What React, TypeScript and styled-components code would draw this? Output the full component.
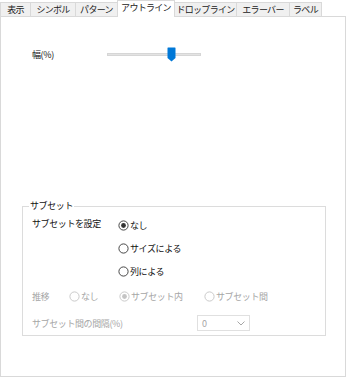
import React from 'react'
import styled, { createGlobalStyle } from 'styled-components'

const GlobalStyle = createGlobalStyle`
  html, body { margin: 0; padding: 0; background: #fff; }
  body {
    font-family: "Noto Sans CJK JP", "Noto Sans", sans-serif;
    font-size: 9px;
    letter-spacing: -0.4px;
    color: #000;
  }
`

const Root = styled.div`
  width: 350px;
  height: 380px;
  background: #fff;
  overflow: hidden;
`

const TabBar = styled.div`
  display: flex;
  align-items: flex-end;
  height: 17px;
`

const Tab = styled.div<{ $active?: boolean; $w: number }>`
  width: ${p => p.$w}px;
  height: ${p => (p.$active ? 17 : 15)}px;
  box-sizing: border-box;
  border: 1px solid #d9d9d9;
  border-bottom: ${p => (p.$active ? 'none' : '1px solid #d9d9d9')};
  margin-left: -1px;
  background: ${p => (p.$active ? '#fff' : '#f0f0f0')};
  font-size: 9px;
  letter-spacing: -0.7px;
  line-height: ${p => (p.$active ? 14 : 13)}px;
  text-align: center;
  color: #222;
  white-space: nowrap;
  &:first-child { margin-left: 0; }
`

const Panel = styled.div`
  width: 346px;
  height: 361px;
  box-sizing: border-box;
  border: 1px solid #d9d9d9;
  margin-top: -1px;
  padding-top: 28px;
  display: flex;
  flex-direction: column;
`

const WidthRow = styled.div`
  display: flex;
  align-items: center;
  padding-left: 31px;
  height: 18px;
`

const Label = styled.span<{ $disabled?: boolean; $w?: number }>`
  color: ${p => (p.$disabled ? '#a6a6a6' : '#111')};
  white-space: nowrap;
  ${p => (p.$w ? `width: ${p.$w}px; flex: none;` : '')}
`

const Slider = styled.div`
  position: relative;
  width: 94px;
  height: 3px;
  background: #e3e3e3;
  border: 1px solid #d6d6d6;
  box-sizing: border-box;
`

const Thumb = styled.svg`
  position: absolute;
  left: 59px;
  top: -7px;
`

const Group = styled.fieldset`
  margin: 137px 0 0 21px;
  width: 304px;
  height: 136px;
  box-sizing: border-box;
  border: 1px solid #dcdcdc;
  padding: 0 0 0 9px;
  display: flex;
  flex-direction: column;
`

const Legend = styled.legend`
  padding: 0 1px;
  margin-left: -3px;
  font-size: 9px;
  color: #111;
  line-height: 12px;
`

const SettingGrid = styled.div`
  display: grid;
  grid-template-columns: 86px auto;
  margin-top: 5px;
`

const RadioList = styled.div`
  display: flex;
  flex-direction: column;
  gap: 7px;
`

const RadioItem = styled.div<{ $disabled?: boolean; $w?: number }>`
  display: flex;
  align-items: center;
  gap: 1px;
  height: 16px;
  color: ${p => (p.$disabled ? '#a6a6a6' : '#111')};
  white-space: nowrap;
  ${p => (p.$w ? `width: ${p.$w}px;` : '')}
`

const TransitionRow = styled.div`
  display: flex;
  align-items: center;
  height: 16px;
  margin-top: 9px;
`

const GapRow = styled.div`
  display: flex;
  align-items: center;
  margin-top: 11px;
`

const Select = styled.div`
  width: 53px;
  height: 16px;
  box-sizing: border-box;
  border: 1px solid #e0e0e0;
  display: flex;
  align-items: center;
  justify-content: space-between;
  padding: 0 4px;
  color: #a6a6a6;
`

const Radio: React.FC<{ checked?: boolean; disabled?: boolean }> = ({ checked, disabled }) => {
  const c = disabled ? '#c4c4c4' : '#333'
  return (
    <svg width="11" height="11" viewBox="0 0 11 11">
      <circle cx="5.5" cy="5.5" r="4.6" fill="#fff" stroke={c} strokeWidth="0.9" />
      {checked && <circle cx="5.5" cy="5.5" r="2.4" fill={c} />}
    </svg>
  )
}

const tabs: [string, number][] = [
  ['表示', 31],
  ['シンボル', 46],
  ['パターン', 43],
  ['アウトライン', 58],
  ['ドロップライン', 63],
  ['エラーバー', 54],
  ['ラベル', 33],
]

export default function App() {
  return (
    <Root>
      <GlobalStyle />
      <TabBar>
        {tabs.map(([t, w]) => (
          <Tab key={t} $w={w} $active={t === 'アウトライン'}>{t}</Tab>
        ))}
      </TabBar>
      <Panel>
        <WidthRow>
          <Label $w={75}>幅(%)</Label>
          <Slider>
            <Thumb width="9" height="15" viewBox="0 0 9 15">
              <path d="M1 0.5 H8 Q8.5 0.5 8.5 1 V11 L4.5 14.5 L0.5 11 V1 Q0.5 0.5 1 0.5 Z" fill="#0078d7" />
            </Thumb>
          </Slider>
        </WidthRow>
        <Group>
          <Legend>サブセット</Legend>
          <SettingGrid>
            <Label>サブセットを設定</Label>
            <RadioList>
              <RadioItem><Radio checked />なし</RadioItem>
              <RadioItem><Radio />サイズによる</RadioItem>
              <RadioItem><Radio />列による</RadioItem>
            </RadioList>
          </SettingGrid>
          <TransitionRow>
            <Label $disabled $w={37}>推移</Label>
            <RadioItem $disabled $w={50}><Radio disabled />なし</RadioItem>
            <RadioItem $disabled $w={85}><Radio disabled checked />サブセット内</RadioItem>
            <RadioItem $disabled><Radio disabled />サブセット間</RadioItem>
          </TransitionRow>
          <GapRow>
            <Label $disabled $w={165}>サブセット間の間隔(%)</Label>
            <Select>
              <span>0</span>
              <svg width="8" height="5" viewBox="0 0 8 5">
                <path d="M0.5 0.5 L4 4 L7.5 0.5" fill="none" stroke="#a6a6a6" strokeWidth="1" />
              </svg>
            </Select>
          </GapRow>
        </Group>
      </Panel>
    </Root>
  )
}
